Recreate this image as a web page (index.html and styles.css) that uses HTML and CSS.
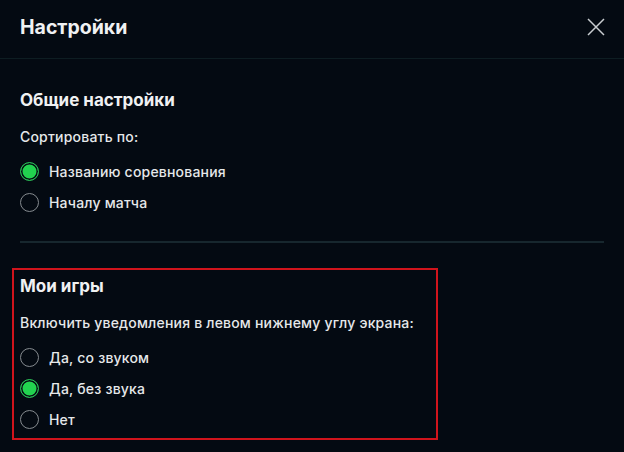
FILE: index.html
```
<!DOCTYPE html>
<html lang="ru">
<head>
  <meta charset="UTF-8">
  <meta name="viewport" content="width=device-width, initial-scale=1.0">
  <title>Настройки</title>
  <link rel="stylesheet" href="styles.css">
</head>
<body>

  <div class="modal">
    <div class="modal-header">
      <h1>Настройки</h1>
      <button class="close-btn" aria-label="Закрыть">
        <svg width="18" height="18" viewBox="0 0 18 18">
          <path d="M1 1 L17 17 M17 1 L1 17" stroke="#c9cdd0" stroke-width="1.5" fill="none"/>
        </svg>
      </button>
    </div>

    <div class="modal-body">
      <div class="section">
        <h2>Общие настройки</h2>
        <p class="label">Сортировать по:</p>
        <div class="option"><span class="radio checked"></span>Названию соревнования</div>
        <div class="option"><span class="radio"></span>Началу матча</div>
      </div>

      <div class="divider"></div>

      <div class="section highlight">
        <h2>Мои игры</h2>
        <p class="label">Включить уведомления в левом нижнему углу экрана:</p>
        <div class="option"><span class="radio"></span>Да, со звуком</div>
        <div class="option"><span class="radio checked"></span>Да, без звука</div>
        <div class="option"><span class="radio"></span>Нет</div>
      </div>
    </div>
  </div>

</body>
</html>
```

FILE: styles.css
```
body {
  margin: 0;
  background-color: #040a12;
  color: #e6e8ea;
  font-family: Inter, "Noto Sans", sans-serif;
}
.modal {
  width: 624px;
  height: 452px;
  overflow: hidden;
}
.modal-header {
  height: 59px;
  display: flex;
  align-items: center;
  justify-content: space-between;
  padding: 0 19px 0 20px;
  border-bottom: 1px solid #0e1d22;
  box-sizing: border-box;
}
.modal-header h1 {
  margin: 0;
  font-size: 19.5px;
  font-weight: 700;
  color: #f0f1f2;
  padding-bottom: 4px;
}
.close-btn {
  background: none;
  border: none;
  padding: 0;
  width: 18px;
  height: 18px;
  cursor: pointer;
  margin-bottom: 5px;
}
.modal-body {
  padding: 29px 20px 0;
}
.section h2 {
  margin: 0;
  font-size: 17px;
  line-height: 24px;
  font-weight: 700;
  color: #f0f1f2;
}
.label {
  margin: 14px 0 8px;
  font-size: 14px;
  font-weight: 500;
  line-height: 22px;
  letter-spacing: 0.2px;
}
.option {
  display: flex;
  align-items: center;
  gap: 10px;
  height: 31px;
  font-size: 14px;
  font-weight: 500;
  letter-spacing: 0.2px;
}
.radio {
  width: 19px;
  height: 19px;
  border-radius: 50%;
  border: 1.5px solid #858a8f;
  box-sizing: border-box;
}
.radio.checked {
  border-color: #2bb857;
  background-color: #22d34f;
  box-shadow: inset 0 0 0 1.5px #040a12;
}
.divider {
  height: 2px;
  background-color: #17272e;
  margin: 23px 0 25px;
}
.highlight {
  width: 426px;
  margin-left: -8px;
  padding: 4px 6px 3px;
  border: 2px solid #d0141c;
  box-sizing: border-box;
}
```
